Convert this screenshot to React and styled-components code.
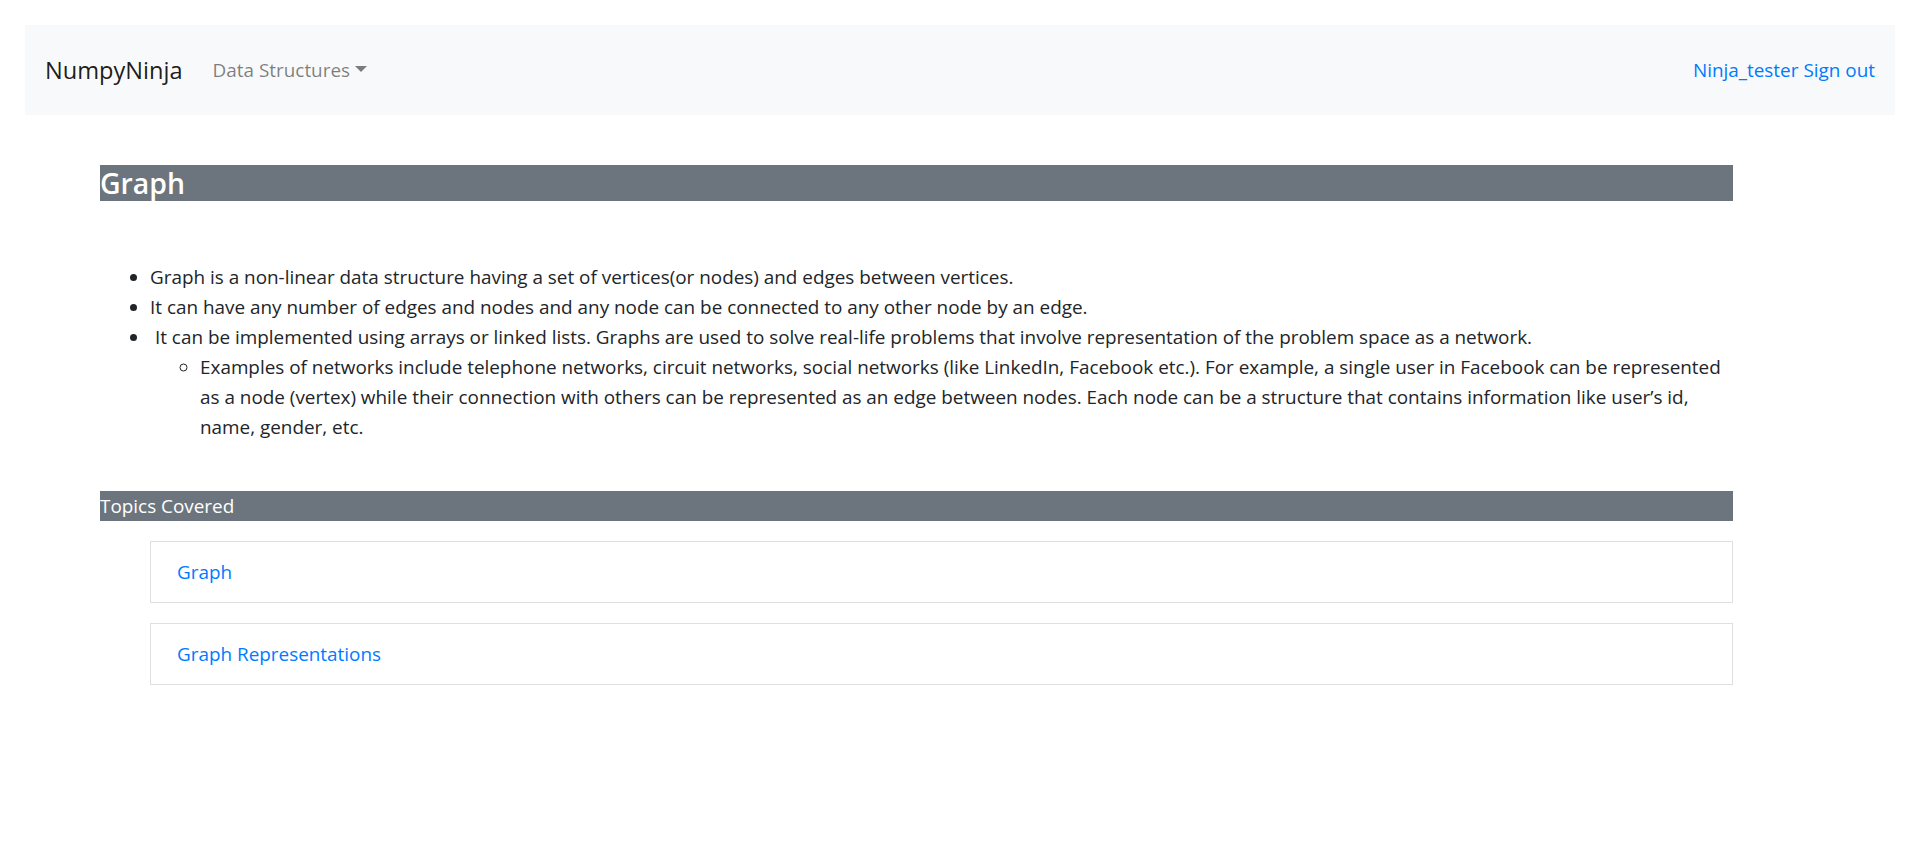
import React from 'react';
import styled, { createGlobalStyle } from 'styled-components';

const GlobalStyle = createGlobalStyle`
  body {
    margin: 0;
    background: #fff;
    color: #212529;
    font-family: "Segoe UI", "Open Sans", "Noto Sans", sans-serif;
    font-size: 18.9px;
    line-height: 30px;
  }
  a { text-decoration: none; }
`;

const Page = styled.div`
  padding: 25px 25px 0;
`;

const Navbar = styled.nav`
  display: flex;
  align-items: center;
  height: 90px;
  padding: 0 20px;
  background: #f8f9fa;
`;

const Brand = styled.a`
  font-size: 23.6px;
  line-height: 37px;
  color: rgba(0, 0, 0, 0.9);
  margin-right: 30px;
`;

const DropdownToggle = styled.a`
  color: rgba(0, 0, 0, 0.5);
  font-size: 18.9px;
  line-height: 30px;
  &::after {
    content: '';
    display: inline-block;
    margin-left: 5px;
    vertical-align: 5px;
    border-top: 6px solid;
    border-left: 6px solid transparent;
    border-right: 6px solid transparent;
  }
`;

const UserNav = styled.div`
  margin-left: auto;
  display: flex;
  gap: 5px;
`;

const NavLink = styled.a`
  color: #007bff;
  font-size: 18.9px;
`;

const Main = styled.main`
  margin: 50px 162px 0 75px;
`;

const SectionTitle = styled.h4`
  margin: 0;
  background: #6c757d;
  color: #fff;
  font-size: 28.4px;
  line-height: 36px;
  font-weight: 600;
`;

const BulletList = styled.ul`
  margin: 61px 0 0;
  padding-left: 50px;
  list-style: ${(p) => p.$marker || 'disc'};
`;

const SubList = styled(BulletList)`
  margin: 0;
`;

const SubHeading = styled.div`
  margin-top: 49px;
  background: #6c757d;
  color: #fff;
  font-size: 18.9px;
  line-height: 30px;
`;

const TopicList = styled.div`
  display: flex;
  flex-direction: column;
  gap: 20px;
  margin: 20px 0 0 50px;
`;

const TopicCard = styled.div`
  border: 1px solid #dfdfdf;
  padding: 15px 26px;
`;

const TopicLink = styled.a`
  color: #007bff;
  font-size: 18.9px;
`;

const topics = ['Graph', 'Graph Representations'];

export default function App() {
  return (
    <>
      <GlobalStyle />
      <Page>
        <Navbar>
          <Brand href="#">NumpyNinja</Brand>
          <DropdownToggle href="#">Data Structures</DropdownToggle>
          <UserNav>
            <NavLink href="#">Ninja_tester</NavLink>
            <NavLink href="#">Sign out</NavLink>
          </UserNav>
        </Navbar>
        <Main>
          <SectionTitle>Graph</SectionTitle>
          <BulletList>
            <li>Graph is a non-linear data structure having a set of vertices(or nodes) and edges between vertices.</li>
            <li>It can have any number of edges and nodes and any node can be connected to any other node by an edge.</li>
            <li>
              {'\u00a0'}It can be implemented using arrays or linked lists. Graphs are used to solve real-life problems that involve representation of the problem space as a network.
              <SubList $marker="circle">
                <li>
                  Examples of networks include telephone networks, circuit networks, social networks (like LinkedIn, Facebook etc.). For example, a single user in Facebook can be represented as a node (vertex) while their connection with others can be represented as an edge between nodes. Each node can be a structure that contains information like user’s id, name, gender, etc.
                </li>
              </SubList>
            </li>
          </BulletList>
          <SubHeading>Topics Covered</SubHeading>
          <TopicList>
            {topics.map((t) => (
              <TopicCard key={t}>
                <TopicLink href="#">{t}</TopicLink>
              </TopicCard>
            ))}
          </TopicList>
        </Main>
      </Page>
    </>
  );
}
